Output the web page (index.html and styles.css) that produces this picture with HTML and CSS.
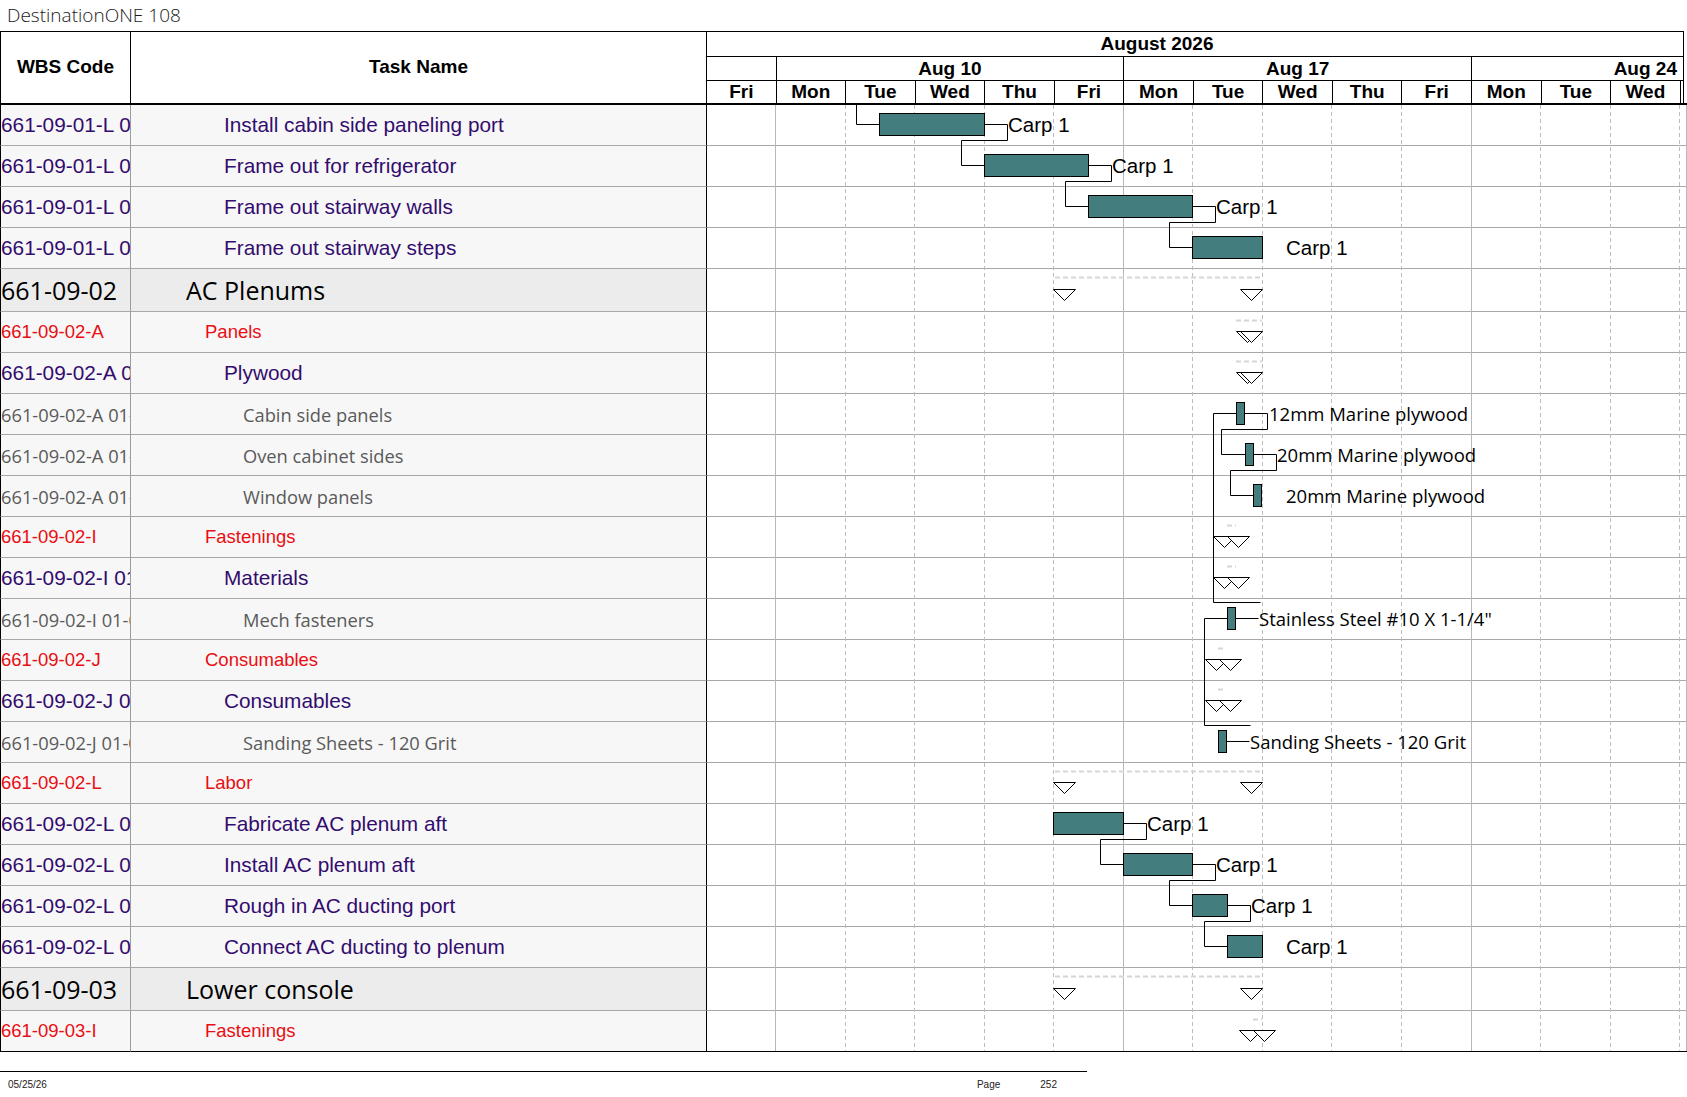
FILE: index.html
```html
<!DOCTYPE html>
<html lang="en">
<head>
<meta charset="utf-8">
<title>DestinationONE 108</title>
<link rel="stylesheet" href="styles.css">
</head>
<body>
<div class="doc-title">DestinationONE 108</div>

<div class="sheet">
  <div class="h-wbs">WBS Code</div>
  <div class="h-task">Task Name</div>
  <div class="timescale">
    <div class="tiers">
      <div class="tier-month">August 2026</div>
      <div class="tier-week">
        <div class="wk"></div>
        <div class="wk">Aug 10</div>
        <div class="wk">Aug 17</div>
        <div class="wk wk-end">Aug 24</div>
      </div>
      <div class="tier-day">
        <div class="dy">Fri</div><div class="dy">Mon</div><div class="dy">Tue</div><div class="dy">Wed</div><div class="dy">Thu</div><div class="dy">Fri</div><div class="dy">Mon</div><div class="dy">Tue</div><div class="dy">Wed</div><div class="dy">Thu</div><div class="dy">Fri</div><div class="dy">Mon</div><div class="dy">Tue</div><div class="dy">Wed</div><div class="dy dy-rest"></div>
      </div>
    </div>
  </div>

  <div class="r l4"><div class="wbs">661-09-01-L 01</div><div class="name">Install cabin side paneling port</div></div>
  <div class="r l4"><div class="wbs">661-09-01-L 02</div><div class="name">Frame out for refrigerator</div></div>
  <div class="r l4"><div class="wbs">661-09-01-L 03</div><div class="name">Frame out stairway walls</div></div>
  <div class="r l4"><div class="wbs">661-09-01-L 04</div><div class="name">Frame out stairway steps</div></div>
  <div class="r l2"><div class="wbs">661-09-02</div><div class="name">AC Plenums</div></div>
  <div class="r l3"><div class="wbs">661-09-02-A</div><div class="name">Panels</div></div>
  <div class="r l4"><div class="wbs">661-09-02-A 01</div><div class="name">Plywood</div></div>
  <div class="r l5"><div class="wbs">661-09-02-A 01-01</div><div class="name">Cabin side panels</div></div>
  <div class="r l5"><div class="wbs">661-09-02-A 01-02</div><div class="name">Oven cabinet sides</div></div>
  <div class="r l5"><div class="wbs">661-09-02-A 01-03</div><div class="name">Window panels</div></div>
  <div class="r l3"><div class="wbs">661-09-02-I</div><div class="name">Fastenings</div></div>
  <div class="r l4"><div class="wbs">661-09-02-I 01</div><div class="name">Materials</div></div>
  <div class="r l5"><div class="wbs">661-09-02-I 01-01</div><div class="name">Mech fasteners</div></div>
  <div class="r l3"><div class="wbs">661-09-02-J</div><div class="name">Consumables</div></div>
  <div class="r l4"><div class="wbs">661-09-02-J 01</div><div class="name">Consumables</div></div>
  <div class="r l5"><div class="wbs">661-09-02-J 01-01</div><div class="name">Sanding Sheets - 120 Grit</div></div>
  <div class="r l3"><div class="wbs">661-09-02-L</div><div class="name">Labor</div></div>
  <div class="r l4"><div class="wbs">661-09-02-L 01</div><div class="name">Fabricate AC plenum aft</div></div>
  <div class="r l4"><div class="wbs">661-09-02-L 02</div><div class="name">Install AC plenum aft</div></div>
  <div class="r l4"><div class="wbs">661-09-02-L 03</div><div class="name">Rough in AC ducting port</div></div>
  <div class="r l4"><div class="wbs">661-09-02-L 04</div><div class="name">Connect AC ducting to plenum</div></div>
  <div class="r l2"><div class="wbs">661-09-03</div><div class="name">Lower console</div></div>
  <div class="r l3 last"><div class="wbs">661-09-03-I</div><div class="name">Fastenings</div></div>

  <div class="chart">
    <svg class="chart-svg" width="980" height="947" viewBox="0 0 980 947" xmlns="http://www.w3.org/2000/svg">
      <g transform="translate(-707 -105)">
        <!-- row lines -->
        <g class="rowlines">
          <line x1="707" x2="1687" y1="145.5" y2="145.5"/>
          <line x1="707" x2="1687" y1="186.5" y2="186.5"/>
          <line x1="707" x2="1687" y1="227.5" y2="227.5"/>
          <line x1="707" x2="1687" y1="268.5" y2="268.5"/>
          <line x1="707" x2="1687" y1="311.5" y2="311.5"/>
          <line x1="707" x2="1687" y1="352.5" y2="352.5"/>
          <line x1="707" x2="1687" y1="393.5" y2="393.5"/>
          <line x1="707" x2="1687" y1="434.5" y2="434.5"/>
          <line x1="707" x2="1687" y1="475.5" y2="475.5"/>
          <line x1="707" x2="1687" y1="516.5" y2="516.5"/>
          <line x1="707" x2="1687" y1="557.5" y2="557.5"/>
          <line x1="707" x2="1687" y1="598.5" y2="598.5"/>
          <line x1="707" x2="1687" y1="639.5" y2="639.5"/>
          <line x1="707" x2="1687" y1="680.5" y2="680.5"/>
          <line x1="707" x2="1687" y1="721.5" y2="721.5"/>
          <line x1="707" x2="1687" y1="762.5" y2="762.5"/>
          <line x1="707" x2="1687" y1="803.5" y2="803.5"/>
          <line x1="707" x2="1687" y1="844.5" y2="844.5"/>
          <line x1="707" x2="1687" y1="885.5" y2="885.5"/>
          <line x1="707" x2="1687" y1="926.5" y2="926.5"/>
          <line x1="707" x2="1687" y1="967.5" y2="967.5"/>
          <line x1="707" x2="1687" y1="1010.5" y2="1010.5"/>
        </g>
        <!-- day grid -->
        <g class="week-lines">
          <line x1="775.5" x2="775.5" y1="105" y2="1051"/>
          <line x1="1123.5" x2="1123.5" y1="105" y2="1051"/>
          <line x1="1471.5" x2="1471.5" y1="105" y2="1051"/>
          <line x1="1686.5" x2="1686.5" y1="105" y2="1051"/>
        </g>
        <g class="day-lines">
          <line x1="845.5" x2="845.5" y1="105" y2="1051"/>
          <line x1="914.5" x2="914.5" y1="105" y2="1051"/>
          <line x1="984.5" x2="984.5" y1="105" y2="1051"/>
          <line x1="1053.5" x2="1053.5" y1="105" y2="1051"/>
          <line x1="1192.5" x2="1192.5" y1="105" y2="1051"/>
          <line x1="1262.5" x2="1262.5" y1="105" y2="1051"/>
          <line x1="1331.5" x2="1331.5" y1="105" y2="1051"/>
          <line x1="1401.5" x2="1401.5" y1="105" y2="1051"/>
          <line x1="1540.5" x2="1540.5" y1="105" y2="1051"/>
          <line x1="1610.5" x2="1610.5" y1="105" y2="1051"/>
          <line x1="1679.5" x2="1679.5" y1="105" y2="1051"/>
        </g>
        <line class="table-bottom" x1="707" x2="1687" y1="1051.5" y2="1051.5"/>

        <!-- summary progress dashes -->
        <g class="sumdash">
          <line x1="1055" x2="1262" y1="277.5" y2="277.5"/>
          <line x1="1236" x2="1262" y1="320.5" y2="320.5"/>
          <line x1="1236" x2="1262" y1="361.5" y2="361.5"/>
          <line x1="1227" x2="1236" y1="525.5" y2="525.5"/>
          <line x1="1227" x2="1236" y1="566.5" y2="566.5"/>
          <line x1="1218" x2="1226" y1="648.5" y2="648.5"/>
          <line x1="1218" x2="1226" y1="689.5" y2="689.5"/>
          <line x1="1055" x2="1262" y1="771.5" y2="771.5"/>
          <line x1="1055" x2="1262" y1="976.5" y2="976.5"/>
          <line x1="1253" x2="1262" y1="1019.5" y2="1019.5"/>
        </g>

        <!-- summary triangles -->
        <g class="tri">
          <polygon points="1053.5,289.5 1075.5,289.5 1064.5,300.5"/>
          <polygon points="1240.5,289.5 1262.5,289.5 1251.5,300.5"/>
          <polygon points="1236.5,331.5 1258.5,331.5 1247.5,342.5"/>
          <polygon points="1240.5,331.5 1262.5,331.5 1251.5,342.5"/>
          <polygon points="1236.5,372.5 1258.5,372.5 1247.5,383.5"/>
          <polygon points="1240.5,372.5 1262.5,372.5 1251.5,383.5"/>
          <polygon points="1213.5,536.5 1235.5,536.5 1224.5,547.5"/>
          <polygon points="1227.5,536.5 1249.5,536.5 1238.5,547.5"/>
          <polygon points="1213.5,577.5 1235.5,577.5 1224.5,588.5"/>
          <polygon points="1227.5,577.5 1249.5,577.5 1238.5,588.5"/>
          <polygon points="1205.5,659.5 1227.5,659.5 1216.5,670.5"/>
          <polygon points="1219.5,659.5 1241.5,659.5 1230.5,670.5"/>
          <polygon points="1205.5,700.5 1227.5,700.5 1216.5,711.5"/>
          <polygon points="1219.5,700.5 1241.5,700.5 1230.5,711.5"/>
          <polygon points="1053.5,782.5 1075.5,782.5 1064.5,793.5"/>
          <polygon points="1240.5,782.5 1262.5,782.5 1251.5,793.5"/>
          <polygon points="1053.5,988.5 1075.5,988.5 1064.5,999.5"/>
          <polygon points="1240.5,988.5 1262.5,988.5 1251.5,999.5"/>
          <polygon points="1239.5,1030.5 1261.5,1030.5 1250.5,1041.5"/>
          <polygon points="1253.5,1030.5 1275.5,1030.5 1264.5,1041.5"/>
        </g>

        <!-- links -->
        <g class="link">
          <polyline points="856.5,105 856.5,124.5 879.5,124.5"/>
          <polyline points="984.5,124.5 1007.5,124.5 1007.5,140.5 961.5,140.5 961.5,165.5 984.5,165.5"/>
          <polyline points="1088.5,165.5 1111.5,165.5 1111.5,181.5 1065.5,181.5 1065.5,206.5 1088.5,206.5"/>
          <polyline points="1192.5,206.5 1215.5,206.5 1215.5,222.5 1169.5,222.5 1169.5,247.5 1192.5,247.5"/>
          <polyline points="1236.5,413.5 1213.5,413.5 1213.5,602.5 1260.5,602.5"/>
          <polyline points="1244.5,413.5 1267.5,413.5 1267.5,429.5 1221.5,429.5 1221.5,454.5 1245.5,454.5"/>
          <polyline points="1253.5,454.5 1276.5,454.5 1276.5,470.5 1230.5,470.5 1230.5,495.5 1253.5,495.5"/>
          <polyline points="1227.5,618.5 1204.5,618.5 1204.5,725.5 1250.5,725.5"/>
          <polyline points="1235.5,618.5 1258.5,618.5"/>
          <polyline points="1226.5,741.5 1249.5,741.5"/>
          <polyline points="1123.5,823.5 1146.5,823.5 1146.5,839.5 1100.5,839.5 1100.5,864.5 1123.5,864.5"/>
          <polyline points="1192.5,864.5 1215.5,864.5 1215.5,880.5 1169.5,880.5 1169.5,905.5 1192.5,905.5"/>
          <polyline points="1227.5,905.5 1250.5,905.5 1250.5,921.5 1204.5,921.5 1204.5,946.5 1227.5,946.5"/>
        </g>

        <!-- task bars -->
        <g class="bar">
          <rect x="879.5" y="113.5" width="105" height="22"/>
          <rect x="984.5" y="154.5" width="104" height="22"/>
          <rect x="1088.5" y="195.5" width="104" height="22"/>
          <rect x="1192.5" y="236.5" width="70" height="22"/>
          <rect x="1236.5" y="402.5" width="8" height="22"/>
          <rect x="1245.5" y="443.5" width="8" height="22"/>
          <rect x="1253.5" y="484.5" width="8" height="22"/>
          <rect x="1227.5" y="607.5" width="8" height="22"/>
          <rect x="1218.5" y="730.5" width="8" height="22"/>
          <rect x="1053.5" y="812.5" width="70" height="22"/>
          <rect x="1123.5" y="853.5" width="69" height="22"/>
          <rect x="1192.5" y="894.5" width="35" height="22"/>
          <rect x="1227.5" y="935.5" width="35" height="22"/>
        </g>

        <!-- bar labels -->
        <g class="lbl-res">
          <text x="1008" y="124.5">Carp 1</text>
          <text x="1112" y="165.5">Carp 1</text>
          <text x="1216" y="206.5">Carp 1</text>
          <text x="1286" y="247.5">Carp 1</text>
          <text x="1147" y="823.5">Carp 1</text>
          <text x="1216" y="864.5">Carp 1</text>
          <text x="1251" y="905.5">Carp 1</text>
          <text x="1286" y="946.5">Carp 1</text>
        </g>
        <g class="lbl-mat">
          <text x="1269" y="413.5">12mm Marine plywood</text>
          <text x="1277" y="454.5">20mm Marine plywood</text>
          <text x="1286" y="495.5">20mm Marine plywood</text>
          <text x="1259" y="618.5">Stainless Steel #10 X 1-1/4"</text>
          <text x="1250" y="741.5">Sanding Sheets - 120 Grit</text>
        </g>
      </g>
    </svg>
  </div>
</div>

<div class="page-footer">
  <span class="f-date">05/25/26</span>
  <span class="f-page">Page</span>
  <span class="f-num">252</span>
</div>
</body>
</html>
```

FILE: styles.css
```css
* { box-sizing: border-box; }

body {
  margin: 0;
  width: 1687px;
  background: #fff;
  color: #000;
  font-family: "Liberation Sans", Arial, sans-serif;
}

.doc-title {
  height: 31px;
  line-height: 31px;
  padding-left: 7px;
  font-family: "Open Sans", "Liberation Sans", sans-serif;
  font-weight: 300;
  font-size: 19px;
  color: #1a1a1a;
}

.sheet {
  display: grid;
  grid-template-columns: 131px 576px 980px;
  grid-template-rows: 74px repeat(4, 41px) 43px repeat(16, 41px) 43px 41px;
}

/* header */
.h-wbs,
.h-task {
  display: flex;
  align-items: center;
  justify-content: center;
  border-top: 1px solid #000;
  border-right: 1px solid #000;
  border-bottom: 2px solid #000;
  font-weight: bold;
  font-size: 19px;
  padding-bottom: 2px;
}
.h-wbs { border-left: 1px solid #000; }

.timescale {
  display: flex;
  border-bottom: 2px solid #000;
}
.tiers {
  width: 977px;
  display: flex;
  flex-direction: column;
  border-top: 1px solid #000;
  border-right: 1px solid #000;
  font-weight: bold;
  font-size: 19px;
}
.tier-month {
  height: 25px;
  border-bottom: 1px solid #000;
  display: flex;
  align-items: center;
  justify-content: center;
  padding-right: 76px;
}
.tier-week {
  height: 24px;
  border-bottom: 1px solid #000;
  display: grid;
  grid-template-columns: 69.55px 347.75px 347.75px 1fr;
}
.wk {
  display: flex;
  align-items: center;
  justify-content: center;
  border-right: 1px solid #000;
  white-space: nowrap;
}
.wk-end {
  border-right: none;
  justify-content: flex-end;
  padding-right: 6px;
}
.tier-day {
  flex: 1;
  display: grid;
  grid-template-columns: repeat(14, 69.55px) 1fr;
}
.dy {
  display: flex;
  align-items: center;
  justify-content: center;
  border-right: 1px solid #000;
}
.dy-rest { border-right: none; }

/* body rows */
.r { display: contents; }

.wbs,
.name {
  display: flex;
  align-items: center;
  white-space: nowrap;
  overflow: hidden;
  background: #f7f7f7;
  border-bottom: 1px solid #a8a8a8;
}
.wbs {
  border-left: 1px solid #000;
  border-right: 1px solid #9c9c9c;
  padding-left: 0;
}
.name { border-right: 1px solid #000; }

.r.last .wbs,
.r.last .name { border-bottom-color: #000; }

.l2 .wbs,
.l2 .name {
  background: #ececec;
  font-family: "Open Sans", "Liberation Sans", sans-serif;
  font-size: 25px;
  color: #000;
}
.l2 .name { padding-left: 55px; }

.l3 .wbs,
.l3 .name {
  font-size: 18.5px;
  color: #ea0d12;
}
.l3 .name { padding-left: 74px; }

.l4 .wbs,
.l4 .name {
  font-size: 20.8px;
  color: #330c6e;
}
.l4 .name { padding-left: 93px; }

.l5 .wbs,
.l5 .name {
  font-family: "Open Sans", "Liberation Sans", sans-serif;
  font-size: 18.3px;
  color: #5a5a5a;
}
.l5 .name { padding-left: 112px; }

/* gantt chart body */
.chart {
  grid-column: 3;
  grid-row: 2 / span 23;
  background: #fff;
}
.chart-svg { display: block; }

.rowlines line { stroke: #a8a8a8; stroke-width: 1; }
.week-lines line { stroke: #b8b8b8; stroke-width: 1; }
.day-lines line { stroke: #bdbdbd; stroke-width: 1; stroke-dasharray: 4 3; }
.table-bottom { stroke: #000; stroke-width: 1; }

.sumdash line { stroke: #d6d6d6; stroke-width: 2; stroke-dasharray: 5 3; }

.tri polygon { fill: #fff; stroke: #000; stroke-width: 1; }

.link polyline { fill: none; stroke: #000; stroke-width: 1; }

.bar rect { fill: #437d7d; stroke: #000; stroke-width: 1; }

.lbl-res text {
  font-family: "Liberation Sans", Arial, sans-serif;
  font-size: 20.5px;
  fill: #000;
  dominant-baseline: central;
}
.lbl-mat text {
  font-family: "Open Sans", "Liberation Sans", sans-serif;
  font-size: 18.5px;
  fill: #000;
  dominant-baseline: central;
}

/* footer */
.page-footer {
  width: 1087px;
  margin-top: 19px;
  border-top: 1px solid #000;
  padding: 7px 0 0 8px;
  display: flex;
  font-size: 10px;
  line-height: 12px;
  color: #222;
}
.f-page { margin-left: auto; }
.f-num { margin-left: 40px; margin-right: 30px; }
```
